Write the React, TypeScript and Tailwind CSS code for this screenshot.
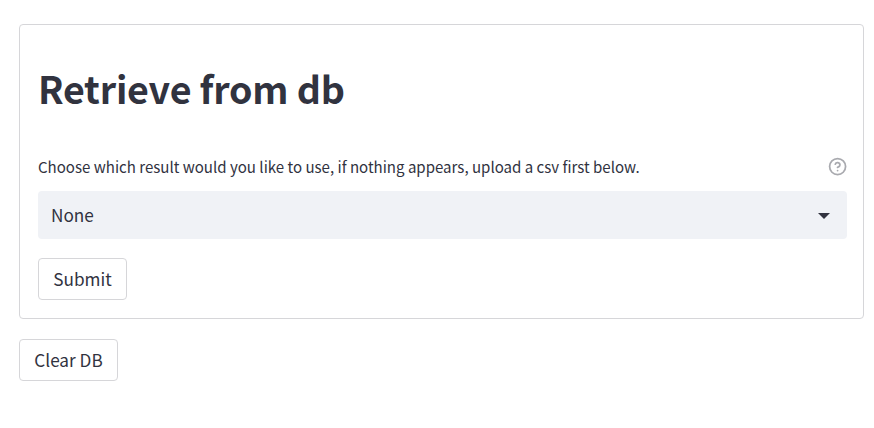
export default function App() {
  return (
    <main className="h-[428px] w-[874px] bg-white pt-6 pr-[10px] pl-[19px] font-['Source_Sans_Pro','Noto_Sans_CJK_SC',sans-serif] text-[#31333f]">
      <form className="flex h-[295px] flex-col rounded border border-[#d6d6d9] pr-4 pl-[18px]" onSubmit={(e) => e.preventDefault()}>
        <h1 className="mt-[37px] h-[51px] text-[37.6px] leading-[51px] font-bold tracking-[-0.22px] whitespace-nowrap">Retrieve from db</h1>
        <div className="mt-[43px] flex h-[22px] items-center justify-between">
          <label className="text-[15.06px] leading-[22px] whitespace-nowrap">Choose which result would you like to use, if nothing appears, upload a csv first below.</label>
          <svg className="mb-px" width="19.2" height="19.2" viewBox="0 0 24 24" fill="none" stroke="#a9aaaf" strokeWidth="2.2" strokeLinecap="round" strokeLinejoin="round">
            <circle cx="12" cy="12" r="10" />
            <path d="M9.09 9a3 3 0 0 1 5.83 1c0 2-3 3-3 3M12 17h.01" />
          </svg>
        </div>
        <div className="mt-[13px] flex h-12 items-center justify-between rounded bg-[#f0f2f6] pr-[17px] pl-[13px] text-[17.2px]">
          <span>None</span>
          <svg className="mt-0.5" width="12" height="6" viewBox="0 0 12 6" fill="currentColor"><path d="M0 0h12L6 6z" /></svg>
        </div>
        <button className="mt-[19px] h-[42px] w-[89px] rounded border border-[#d6d6d9] text-[17.2px] whitespace-nowrap">Submit</button>
      </form>
      <button className="mt-5 h-[42px] w-[99px] rounded border border-[#d6d6d9] text-[17.2px] whitespace-nowrap">Clear DB</button>
    </main>
  );
}
